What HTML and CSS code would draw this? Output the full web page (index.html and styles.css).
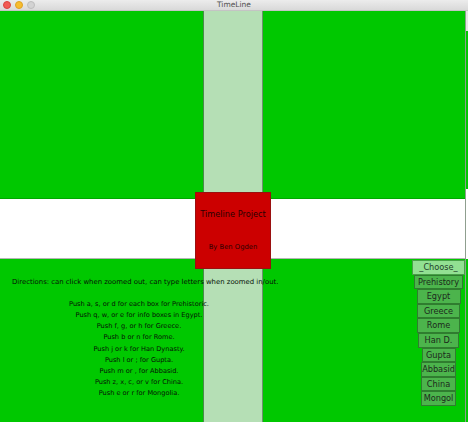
FILE: index.html
```html
<!DOCTYPE html>
<html>
<head>
<meta charset="utf-8">
<title>TimeLine</title>
<link rel="stylesheet" href="styles.css">
</head>
<body>
<div class="window">
  <div class="titlebar">
    <div class="lights">
      <span class="light red"></span>
      <span class="light yellow"></span>
      <span class="light grey"></span>
    </div>
    <div class="title">TimeLine</div>
  </div>
  <div class="content">
    <div class="canvas">
      <div class="top-area"></div>
      <div class="band"></div>
      <div class="bottom-area">
        <div class="directions">
          <p class="lead">Directions: can click when zoomed out, can type letters when zoomed in/out.</p>
          <p>Push a, s, or d for each box for Prehistoric.</p>
          <p>Push q, w, or e for info boxes in Egypt.</p>
          <p>Push f, g, or h for Greece.</p>
          <p>Push b or n for Rome.</p>
          <p>Push j or k for Han Dynasty.</p>
          <p>Push l or ; for Gupta.</p>
          <p>Push m or , for Abbasid.</p>
          <p>Push z, x, c, or v for China.</p>
          <p>Push e or r for Mongolia.</p>
        </div>
        <div class="choices">
          <div class="choice choose w53">_Choose_</div>
          <div class="choice w49">Prehistory</div>
          <div class="choice w44">Egypt</div>
          <div class="choice w43">Greece</div>
          <div class="choice w43">Rome</div>
          <div class="choice w41">Han D.</div>
          <div class="choice w34">Gupta</div>
          <div class="choice w35">Abbasid</div>
          <div class="choice w35">China</div>
          <div class="choice w35">Mongol</div>
        </div>
      </div>
      <div class="project">
        <div class="project-title">Timeline Project</div>
        <div class="project-author">By Ben Ogden</div>
      </div>
    </div>
    <div class="edge"></div>
  </div>
</div>
</body>
</html>
```
FILE: styles.css
```css
* { box-sizing: border-box; }
html, body { margin: 0; padding: 0; }
body {
  width: 468px;
  height: 422px;
  overflow: hidden;
  font-family: "DejaVu Sans", "Liberation Sans", sans-serif;
  background: #00c800;
}
.window {
  display: flex;
  flex-direction: column;
  height: 422px;
}
.titlebar {
  height: 11px;
  flex: none;
  background: linear-gradient(#ececec, #d9d9d9);
  border-bottom: 1px solid #c4c4c4;
  display: flex;
  align-items: center;
  justify-content: center;
  position: relative;
}
.lights {
  position: absolute;
  left: 3px;
  top: 1px;
  display: flex;
  gap: 4px;
}
.light {
  width: 8px;
  height: 8px;
  border-radius: 50%;
  display: block;
}
.light.red { background: #f25b54; border: 1px solid #d9443e; }
.light.yellow { background: #f7bd2f; border: 1px solid #dea226; }
.light.grey { background: #d3d3d3; border: 1px solid #bdbdbd; }
.title {
  font-size: 7.5px;
  color: #4f4f4f;
  line-height: 10px;
}
.content {
  flex: 1;
  display: flex;
}
.canvas {
  position: relative;
  width: 465px;
  display: flex;
  flex-direction: column;
  background: linear-gradient(to right,
    #00c800 0 203px,
    #4a8a4a 203px 204px,
    #b5dfb5 204px 262px,
    #6f8f6f 262px 263px,
    #00c800 263px);
}
.edge {
  width: 3px;
  border-left: 1px solid #8f9f8f;
  background: linear-gradient(#e6e6e6 0 20px, #00c800 20px 178px, #ffffff 178px 248px, #00c800 248px);
}
.top-area {
  height: 188px;
  flex: none;
  border-bottom: 1px solid #00a800;
}
.band {
  height: 60px;
  flex: none;
  background: #ffffff;
  border-bottom: 1px solid #b4b4b4;
}
.bottom-area {
  flex: 1;
  display: flex;
  justify-content: space-between;
}
.directions {
  width: 278px;
  padding-top: 18px;
  text-align: center;
  font-size: 6.6px;
  color: #061006;
}
.directions p {
  margin: 0;
  line-height: 11.2px;
}
.directions p.lead {
  text-align: left;
  padding-left: 12px;
  font-size: 6.9px;
  margin-bottom: 10.5px;
  white-space: nowrap;
}
.choices {
  width: 53px;
  display: flex;
  flex-direction: column;
  align-items: center;
  padding-top: 1px;
}
.choice {
  height: 14.6px;
  line-height: 12.6px;
  background: #4cb44c;
  border: 1px solid #2f7d2f;
  font-size: 8.2px;
  color: #1c2a1c;
  text-align: center;
  white-space: nowrap;
  overflow: hidden;
}
.choice.choose {
  background: #92e092;
  border-color: #47a047;
  color: #23402a;
}
.w53 { width: 53px; }
.w49 { width: 49px; }
.w44 { width: 44px; }
.w43 { width: 43px; }
.w41 { width: 41px; }
.w35 { width: 35px; }
.w34 { width: 34px; }
.project {
  position: absolute;
  left: 195px;
  top: 181px;
  width: 76px;
  height: 77px;
  background: #cc0000;
  border: 1px solid #9a1010;
  text-align: center;
  color: #2a0000;
}
.project-title {
  font-size: 8.2px;
  margin-top: 16px;
  line-height: 10px;
}
.project-author {
  font-size: 6.8px;
  margin-top: 24px;
  line-height: 9px;
}
```
